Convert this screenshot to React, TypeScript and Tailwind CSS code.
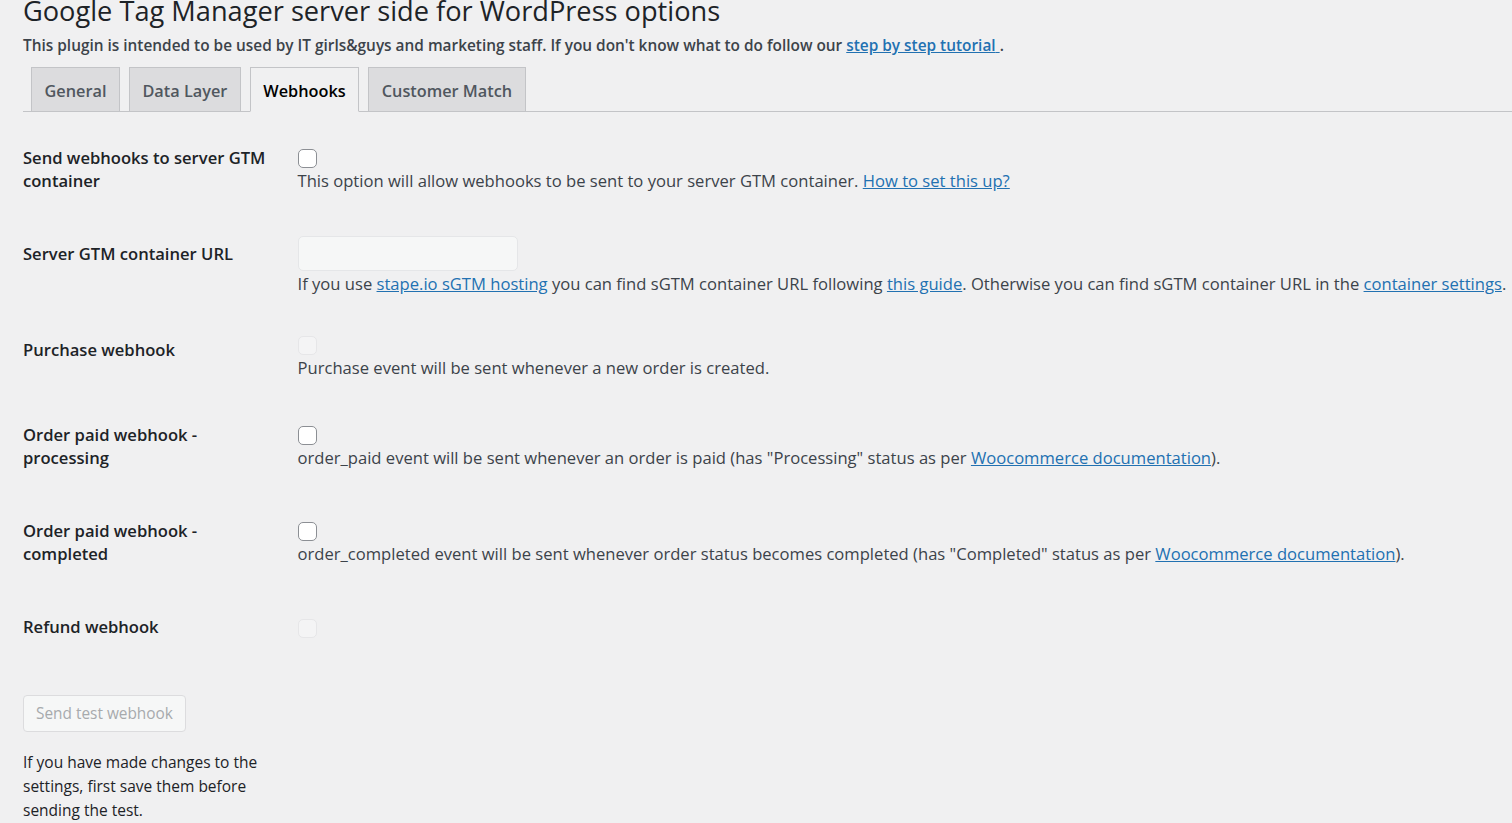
import React from "react";

const link = "text-[#2271b1] underline";

function Checkbox({ disabled = false }: { disabled?: boolean }) {
  return (
    <div className="h-[23px] pt-[4px]">
      <input
        type="checkbox"
        disabled={disabled}
        className={
          "m-0 block h-[19px] w-[19px] appearance-none rounded-[5px] border " +
          (disabled
            ? "border-[#e6e6e8] bg-[#f4f4f5]"
            : "border-[#8c8f94] bg-white")
        }
      />
    </div>
  );
}

function Description({ children }: { children: React.ReactNode }) {
  return (
    <p className="mt-[2px] text-[16.6px] leading-[22px] text-[#3c434a]">
      {children}
    </p>
  );
}

interface RowProps {
  label: string;
  children: React.ReactNode;
}

function Row({ label, children }: RowProps) {
  return (
    <tr>
      <th className="w-[262px] pt-[25px] pb-[25px] pr-[12px] text-left align-top text-[16.6px] leading-[23px] font-semibold text-[#1d2327]">
        {label}
      </th>
      <td className="pl-[12.5px] pr-0 py-[18.75px] align-middle text-[16.6px] leading-[22px]">
        {children}
      </td>
    </tr>
  );
}

const tabs = ["General", "Data Layer", "Webhooks", "Customer Match"];

export default function App() {
  return (
    <div className="min-h-screen overflow-hidden bg-[#f0f0f1] pl-[23px] font-['Open_Sans',sans-serif] text-[#3c434a]">
      <h1 className="-mt-[7px] text-[27.2px] leading-[1.3] font-normal text-[#1d2327]">
        Google Tag Manager server side for WordPress options
      </h1>
      <p className="mt-[6px] text-[15.4px] leading-[24px] font-semibold text-[#3c434a]">
        This plugin is intended to be used by IT girls&amp;guys and marketing
        staff. If you don't know what to do follow our{" "}
        <a href="#" className={link}>
          step by step tutorial{" "}
        </a>
        .
      </p>

      <div className="mt-[9px] flex gap-[9px] border-b border-[#c3c4c7] pl-[8px]">
        {tabs.map((t) => {
          const active = t === "Webhooks";
          return (
            <a
              key={t}
              href="#"
              className={
                "-mb-px border px-[12.5px] pt-[8px] pb-[5px] text-[16.3px] leading-[30px] font-semibold " +
                (active
                  ? "border-[#c3c4c7] border-b-[#f0f0f1] bg-[#f0f0f1] text-black"
                  : "border-[#c3c4c7] bg-[#dcdcde] text-[#50575e]")
              }
            >
              {t}
            </a>
          );
        })}
      </div>

      <table className="mt-[8.5px] w-full border-collapse">
        <tbody>
          <Row label="Send webhooks to server GTM container">
            <Checkbox />
            <Description>
              This option will allow webhooks to be sent to your server GTM
              container.{" "}
              <a href="#" className={link}>
                How to set this up?
              </a>
            </Description>
          </Row>
          <Row label="Server GTM container URL">
            <input
              type="text"
              disabled
              className="block h-[35px] w-[220px] rounded-[5px] border border-[#e5e6e8] bg-[#f6f7f7]"
            />
            <Description>
              If you use{" "}
              <a href="#" className={link}>
                stape.io sGTM hosting
              </a>{" "}
              you can find sGTM container URL following{" "}
              <a href="#" className={link}>
                this guide
              </a>
              . Otherwise you can find sGTM container URL in the{" "}
              <a href="#" className={link}>
                container settings
              </a>
              .
            </Description>
          </Row>
          <Row label="Purchase webhook">
            <Checkbox disabled />
            <Description>
              Purchase event will be sent whenever a new order is created.
            </Description>
          </Row>
          <Row label="Order paid webhook - processing">
            <Checkbox />
            <Description>
              order_paid event will be sent whenever an order is paid (has
              "Processing" status as per{" "}
              <a href="#" className={link}>
                Woocommerce documentation
              </a>
              ).
            </Description>
          </Row>
          <Row label="Order paid webhook - completed">
            <Checkbox />
            <Description>
              order_completed event will be sent whenever order status becomes
              completed (has "Completed" status as per{" "}
              <a href="#" className={link}>
                Woocommerce documentation
              </a>
              ).
            </Description>
          </Row>
          <Row label="Refund webhook">
            <Checkbox disabled />
          </Row>
        </tbody>
      </table>

      <div className="mt-[32.5px] w-[250px]">
        <button
          disabled
          className="h-[37px] rounded-[4px] border border-[#dcdcde] bg-[#f6f7f7] px-[12px] text-[15.4px] text-[#a7aaad]"
        >
          Send test webhook
        </button>
        <p className="mt-[18px] text-[15.5px] leading-[24px] text-[#1d2327]">
          If you have made changes to the settings, first save them before
          sending the test.
        </p>
      </div>
    </div>
  );
}
